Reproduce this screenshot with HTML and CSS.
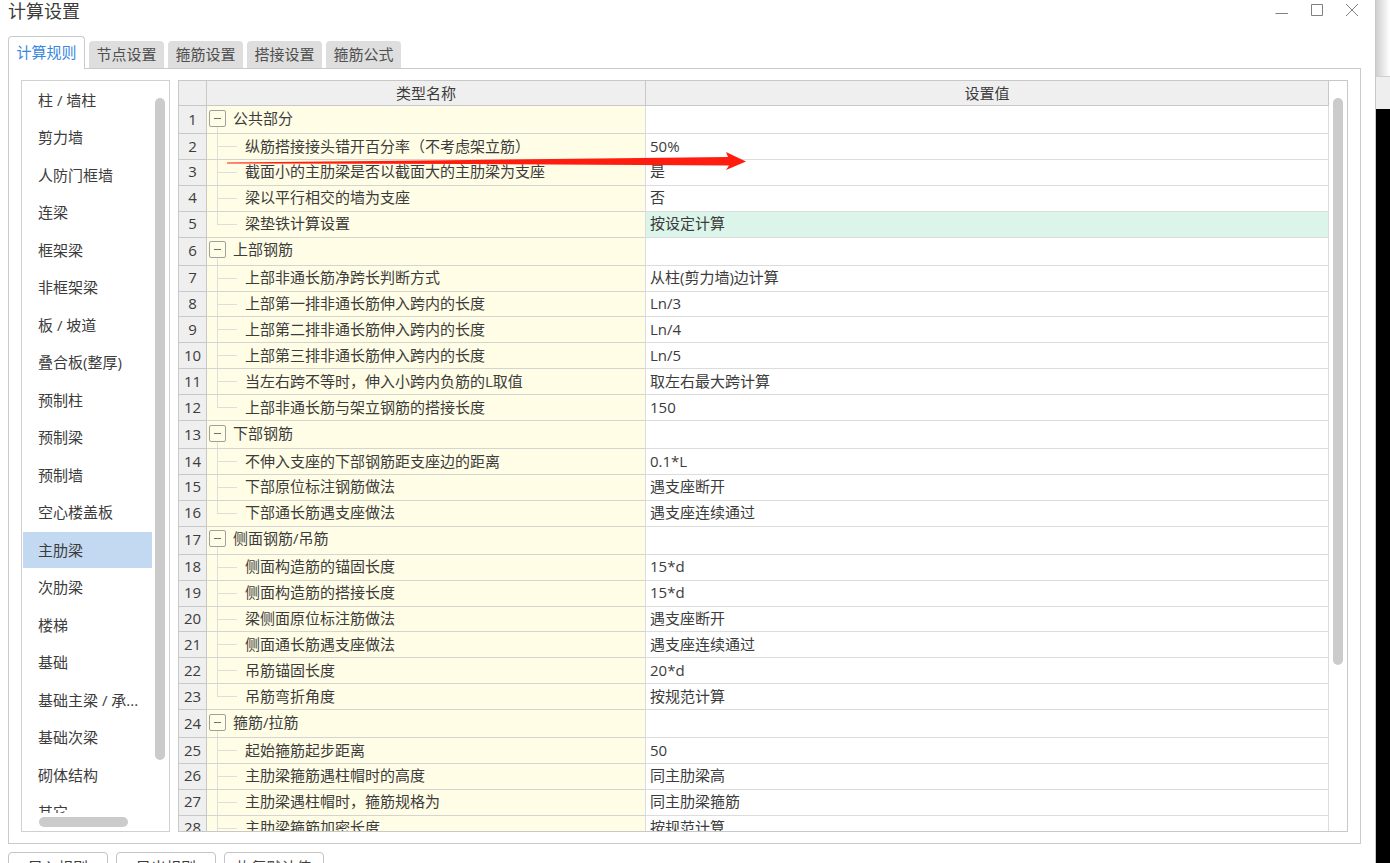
FILE: index.html
```html
<!DOCTYPE html>
<html lang="zh-CN">
<head>
    <meta charset="UTF-8">
    <meta name="viewport" content="width=device-width, initial-scale=1.0">
    <title>计算设置</title>
    <link rel="stylesheet" href="styles.css">
</head>
<body>
    <div class="dialog">
        <div class="title-bar">
            <h1>计算设置</h1>
            <div class="window-buttons">
                <button type="button" aria-label="最小化"><svg width="14" height="14" viewBox="0 0 14 14"><path d="M0.500 10.500H13"/></svg></button>
                <button type="button" aria-label="最大化"><svg width="14" height="14" viewBox="0 0 14 14"><path d="M1.500 1.500H12.500V12.500H1.500Z"/></svg></button>
                <button type="button" aria-label="关闭"><svg width="14" height="14" viewBox="0 0 14 14"><path d="M1 1L13 13M13 1L1 13"/></svg></button>
            </div>
        </div>

        <div class="tabs" role="tablist">
            <button type="button" role="tab" class="tab active" aria-selected="true">计算规则</button>
            <button type="button" role="tab" class="tab">节点设置</button>
            <button type="button" role="tab" class="tab">箍筋设置</button>
            <button type="button" role="tab" class="tab">搭接设置</button>
            <button type="button" role="tab" class="tab">箍筋公式</button>
        </div>

        <div class="panel">
            <!-- Component list -->
            <div class="sidebar">
                <div class="sidebar-scroll">
                    <div class="component-list">
                        <button type="button">柱 / 墙柱</button>
                        <button type="button">剪力墙</button>
                        <button type="button">人防门框墙</button>
                        <button type="button">连梁</button>
                        <button type="button">框架梁</button>
                        <button type="button">非框架梁</button>
                        <button type="button">板 / 坡道</button>
                        <button type="button">叠合板(整厚)</button>
                        <button type="button">预制柱</button>
                        <button type="button">预制梁</button>
                        <button type="button">预制墙</button>
                        <button type="button">空心楼盖板</button>
                        <button type="button" class="selected">主肋梁</button>
                        <button type="button">次肋梁</button>
                        <button type="button">楼梯</button>
                        <button type="button">基础</button>
                        <button type="button">基础主梁 / 承...</button>
                        <button type="button">基础次梁</button>
                        <button type="button">砌体结构</button>
                        <button type="button">其它</button>
                    </div>
                    <div class="list-track"><div class="list-thumb"></div></div>
                </div>
                <div class="bottom-track"><div class="bottom-thumb"></div></div>
            </div>

            <!-- Settings table -->
            <div class="grid-box">
                <div class="grid-scroll">
                    <table>
                        <colgroup>
                            <col class="col-number">
                            <col class="col-name">
                            <col>
                        </colgroup>
                        <thead>
                            <tr><th></th><th>类型名称</th><th>设置值</th></tr>
                        </thead>
                        <tbody>
                            <tr class="group"><th>1</th><td><button type="button" class="toggle" aria-label="折叠"></button>公共部分</td><td></td></tr>
                            <tr><th>2</th><td>纵筋搭接接头错开百分率（不考虑架立筋）</td><td>50%</td></tr>
                            <tr><th>3</th><td>截面小的主肋梁是否以截面大的主肋梁为支座</td><td>是</td></tr>
                            <tr><th>4</th><td>梁以平行相交的墙为支座</td><td>否</td></tr>
                            <tr class="last current"><th>5</th><td>梁垫铁计算设置</td><td>按设定计算</td></tr>
                            <tr class="group"><th>6</th><td><button type="button" class="toggle" aria-label="折叠"></button>上部钢筋</td><td></td></tr>
                            <tr><th>7</th><td>上部非通长筋净跨长判断方式</td><td>从柱(剪力墙)边计算</td></tr>
                            <tr><th>8</th><td>上部第一排非通长筋伸入跨内的长度</td><td>Ln/3</td></tr>
                            <tr><th>9</th><td>上部第二排非通长筋伸入跨内的长度</td><td>Ln/4</td></tr>
                            <tr><th>10</th><td>上部第三排非通长筋伸入跨内的长度</td><td>Ln/5</td></tr>
                            <tr><th>11</th><td>当左右跨不等时，伸入小跨内负筋的L取值</td><td>取左右最大跨计算</td></tr>
                            <tr class="last"><th>12</th><td>上部非通长筋与架立钢筋的搭接长度</td><td>150</td></tr>
                            <tr class="group"><th>13</th><td><button type="button" class="toggle" aria-label="折叠"></button>下部钢筋</td><td></td></tr>
                            <tr><th>14</th><td>不伸入支座的下部钢筋距支座边的距离</td><td>0.1*L</td></tr>
                            <tr><th>15</th><td>下部原位标注钢筋做法</td><td>遇支座断开</td></tr>
                            <tr class="last"><th>16</th><td>下部通长筋遇支座做法</td><td>遇支座连续通过</td></tr>
                            <tr class="group"><th>17</th><td><button type="button" class="toggle" aria-label="折叠"></button>侧面钢筋/吊筋</td><td></td></tr>
                            <tr><th>18</th><td>侧面构造筋的锚固长度</td><td>15*d</td></tr>
                            <tr><th>19</th><td>侧面构造筋的搭接长度</td><td>15*d</td></tr>
                            <tr><th>20</th><td>梁侧面原位标注筋做法</td><td>遇支座断开</td></tr>
                            <tr><th>21</th><td>侧面通长筋遇支座做法</td><td>遇支座连续通过</td></tr>
                            <tr><th>22</th><td>吊筋锚固长度</td><td>20*d</td></tr>
                            <tr class="last"><th>23</th><td>吊筋弯折角度</td><td>按规范计算</td></tr>
                            <tr class="group"><th>24</th><td><button type="button" class="toggle" aria-label="折叠"></button>箍筋/拉筋</td><td></td></tr>
                            <tr><th>25</th><td>起始箍筋起步距离</td><td>50</td></tr>
                            <tr><th>26</th><td>主肋梁箍筋遇柱帽时的高度</td><td>同主肋梁高</td></tr>
                            <tr><th>27</th><td>主肋梁遇柱帽时，箍筋规格为</td><td>同主肋梁箍筋</td></tr>
                            <tr><th>28</th><td>主肋梁箍筋加密长度</td><td>按规范计算</td></tr>
                        </tbody>
                    </table>
                </div>
                <div class="grid-track"><div class="grid-thumb"></div></div>
                <svg class="arrow" width="520" height="20" viewBox="0 0 520 20"><path d="M0 11.500L243 9L501 6L499 1L519 10.500L499 19L502 14.500L243 13L0 12.500Z"/></svg>
            </div>
        </div>

        <div class="footer">
            <button type="button">导入规则</button>
            <button type="button">导出规则</button>
            <button type="button">恢复默认值</button>
        </div>
    </div>

    <!-- Window behind the dialog -->
    <div class="backdrop">
        <div class="backdrop-top"></div>
        <div class="backdrop-bar"></div>
    </div>
</body>
</html>
```
FILE: styles.css
```css
* {
    box-sizing: border-box;
}

body {
    margin: 0;
    display: flex;
    height: 100vh;
    overflow: hidden;
    background-color: #fff;
    color: #3c3c3c;
    font-family: "Open Sans", "Noto Sans CJK SC", sans-serif;
    font-size: 15px;
    line-height: 20px;
}

button {
    font: inherit;
    color: inherit;
    padding: 0;
    border: none;
    background: none;
    cursor: pointer;
}

/* the footer runs past the bottom of the screen */
.dialog {
    flex: 1;
    min-width: 0;
    height: calc(100vh + 19px);
    display: flex;
    flex-direction: column;
    padding: 0 14px 0 8px;
    border-right: 1px solid #c8c8c8;
}

.title-bar {
    display: flex;
    justify-content: space-between;
    height: 36px;
    padding-right: 2px;
}

h1 {
    margin: 0;
    font-size: 18px;
    font-weight: normal;
    line-height: 22px;
}

.window-buttons {
    display: flex;
    gap: 21px;
    height: 20px;
}

.window-buttons button {
    display: flex;
    align-items: center;
}

.window-buttons svg {
    fill: none;
    stroke: #808080;
}

/* Tabs */
.tabs {
    display: flex;
    align-items: flex-end;
    gap: 4px;
    height: 32px;
}

.tab {
    width: 75px;
    height: 27px;
    padding-bottom: 2px;
    border-radius: 4px 4px 0 0;
    background-color: #dedede;
    color: #505050;
}

.tab.active {
    width: 77px;
    height: 33px;
    margin-bottom: -1px;
    border: 1px solid #c4ccd0;
    border-bottom: none;
    background-color: #fff;
    color: #3a87e0;
    z-index: 1;
}

.panel {
    flex: 1;
    min-height: 0;
    display: flex;
    gap: 8px;
    padding: 11px 12px;
    border: 1px solid #c4ccd0;
}

/* Component list */
.sidebar {
    width: 149px;
    display: flex;
    flex-direction: column;
    border: 1px solid #d0d0d0;
}

.sidebar-scroll {
    flex: 1;
    min-height: 0;
    display: flex;
    overflow: hidden;
}

.component-list {
    flex: 1;
    display: grid;
    grid-auto-rows: 1fr;
    gap: 2px;
    height: 748px;
    margin: 1px 3px 0 1px;
}

.component-list button {
    padding-left: 15px;
    text-align: left;
    white-space: nowrap;
}

.component-list .selected {
    background-color: #c2d9f1;
}

.list-track {
    width: 14px;
    padding-top: 17px;
}

.list-thumb {
    width: 10px;
    height: 662px;
    border-radius: 5px;
    background-color: #cbcbcb;
}

.bottom-track {
    height: 18px;
    padding: 4px 17px;
}

.bottom-thumb {
    width: 89px;
    height: 10px;
    border-radius: 5px;
    background-color: #cbcbcb;
}

/* Settings table */
.grid-box {
    flex: 1;
    min-width: 0;
    display: flex;
    position: relative;
    border: 1px solid #c8c8c8;
}

.grid-scroll {
    flex: 1;
    min-width: 0;
    overflow: hidden;
}

table {
    width: 100%;
    height: 761px;
    table-layout: fixed;
    border-collapse: separate;
    border-spacing: 0;
}

.col-number {
    width: 28px;
}

.col-name {
    width: 439px;
}

th,
td {
    padding: 0 0 2px;
    border-right: 1px solid #dcdcdc;
    border-bottom: 1px solid #dcdcdc;
    white-space: nowrap;
}

th {
    border-color: #c8c8c8;
    background-color: #efefef;
    font-weight: normal;
}

thead th {
    height: 25px;
    padding: 0;
}

td {
    padding-left: 4px;
}

/* tree lines are painted as cell backgrounds */
td:nth-child(2) {
    padding-left: 38px;
    border-bottom-color: #d4d4d0;
    background-color: #fffde5;
    background-image: linear-gradient(#dedede, #dedede), linear-gradient(#dedede, #dedede);
    background-repeat: no-repeat;
    background-position: 10px 0, 10px 12px;
    background-size: 1px 100%, 20px 1px;
}

.last td:nth-child(2) {
    background-size: 1px 12px, 20px 1px;
}

.group td:nth-child(2) {
    padding-left: 2px;
    background-position: 10px 20px, 0 0;
    background-size: 1px 100%, 0 0;
}

.current td:last-child {
    background-color: #dcf5ea;
}

.toggle {
    display: inline-flex;
    align-items: center;
    justify-content: center;
    width: 17px;
    height: 17px;
    margin: 0 7px 3px 0;
    border: 1px solid #a0a0a0;
    border-radius: 2px;
    background-color: #fffde5;
    vertical-align: middle;
}

.toggle::before {
    content: "";
    width: 7px;
    height: 1px;
    background-color: #707070;
}

.grid-track {
    width: 18px;
    padding: 17px 4px;
}

.grid-thumb {
    width: 10px;
    height: 567px;
    border-radius: 5px;
    background-color: #cbcbcb;
}

.arrow {
    position: absolute;
    left: 48px;
    top: 70px;
    fill: #ff1d0f;
}

/* Footer */
.footer {
    display: flex;
    gap: 8px;
    padding-top: 8px;
}

.footer button {
    width: 100px;
    height: 30px;
    border: 1px solid #c4c4c4;
    border-radius: 4px;
    background-color: #fff;
}

.backdrop {
    width: 14px;
    background-color: #000;
}

.backdrop-top {
    height: 76px;
    background: linear-gradient(to right, #cfcfcf, #fff);
}

.backdrop-bar {
    height: 33px;
    border-top: 1px solid #d0d0d0;
    background-color: #eee;
}
```
